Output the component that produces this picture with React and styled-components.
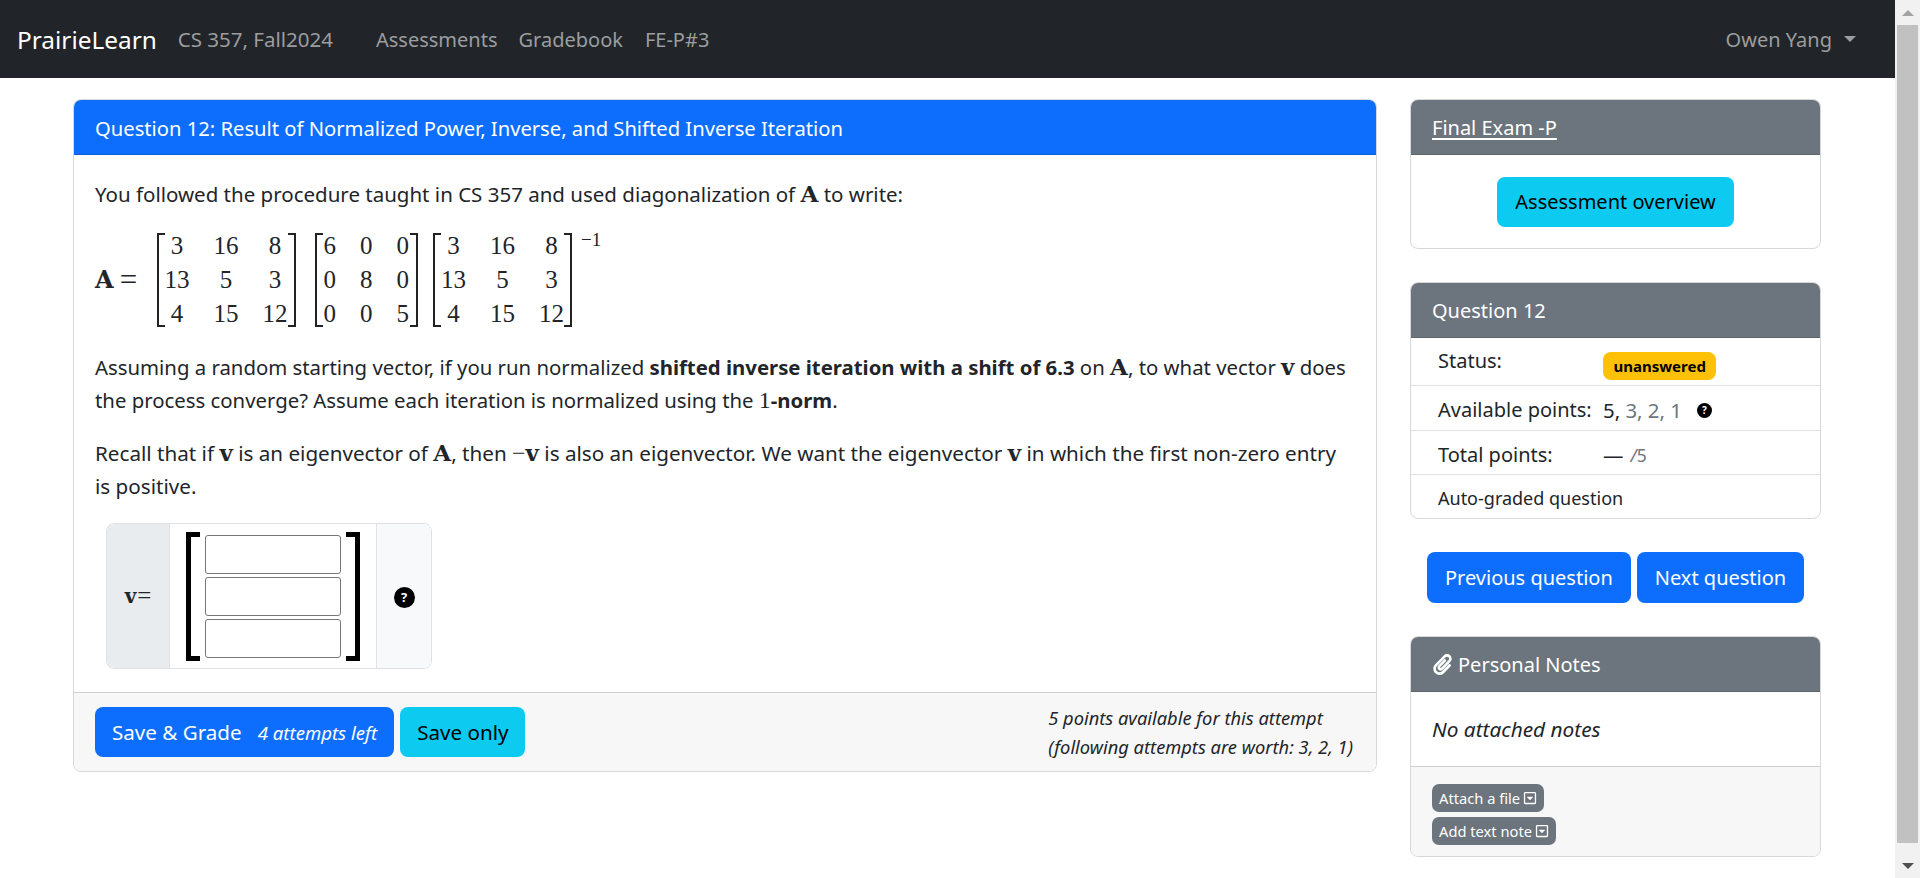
import React from 'react';
import styled, { createGlobalStyle } from 'styled-components';
import { FaPaperclip, FaRegCaretSquareDown } from 'react-icons/fa';

const UI_FONT = `"Noto Sans", "Open Sans", sans-serif`;
const MATH_FONT = `"Liberation Serif", serif`;
const MATH_BOLD = `"DejaVu Serif", serif`;

const GlobalStyle = createGlobalStyle`
  html, body {
    margin: 0;
    height: 878px;
    overflow: hidden;
    background: #fff;
  }
  * { box-sizing: border-box; }
  body {
    font-family: ${UI_FONT};
    font-size: 20px;
    color: #212529;
  }
`;

const Shell = styled.div`
  display: flex;
  height: 878px;
`;

const Page = styled.div`
  flex: 1;
  min-width: 0;
`;

const ScrollRail = styled.div`
  width: 25px;
  background: #f1f1f1;
  display: flex;
  flex-direction: column;
  align-items: center;
`;

const ScrollArrow = styled.div`
  height: 25px;
  display: flex;
  align-items: center;
  justify-content: center;
  &::before {
    content: '';
    border-left: 6px solid transparent;
    border-right: 6px solid transparent;
    ${p => (p.$down ? 'border-top: 6px solid #505050;' : 'border-bottom: 6px solid #a3a3a3;')}
  }
`;

const ScrollThumb = styled.div`
  width: 21px;
  height: 818px;
  background: #c1c1c1;
  margin-bottom: 10px;
`;

const Navbar = styled.nav`
  height: 78px;
  background: #212529;
  display: flex;
  align-items: center;
  padding: 0 39px 0 17px;
`;

const Brand = styled.a`
  color: #fff;
  font-size: 24.4px;
  margin-right: 21px;
`;

const NavLink = styled.a`
  color: #9c9d9f;
  margin-left: ${p => p.$left || 0}px;
`;

const CourseLink = styled(NavLink)`
  font-size: 20.5px;
`;

const UserMenu = styled.div`
  margin-left: auto;
  color: #9c9d9f;
  display: flex;
  align-items: center;
  gap: 12px;
  &::after {
    content: '';
    border-top: 6px solid #9c9d9f;
    border-left: 6px solid transparent;
    border-right: 6px solid transparent;
  }
`;

const Layout = styled.main`
  display: grid;
  grid-template-columns: 1304px 411px;
  column-gap: 33px;
  padding: 21px 0 0 73px;
  align-items: start;
`;

const Side = styled.aside`
  display: flex;
  flex-direction: column;
`;

const Card = styled.section`
  background: #fff;
  border: 1px solid #d8d8d8;
  border-radius: 8px;
  overflow: hidden;
  margin-bottom: ${p => p.$gap || 0}px;
`;

const CardHeader = styled.header`
  height: 55px;
  padding: ${p => (p.$primary ? '1px' : 0)} 21px 0;
  display: flex;
  align-items: center;
  color: #fff;
  background: ${p => (p.$primary ? '#0d6efd' : '#6c757d')};
  border-bottom: 1px solid rgba(0, 0, 0, 0.125);
  font-size: ${p => (p.$primary ? '20.2px' : '20px')};
`;

const HeaderLink = styled.a`
  color: #fff;
  text-decoration: underline;
  text-underline-offset: 3px;
`;

const HeaderClip = styled(FaPaperclip)`
  font-size: 21px;
  margin-right: 5px;
`;

const QuestionBody = styled.div`
  padding: 23px 21px 22px;
  height: 537px;
`;

const Para = styled.p`
  margin: 0 0 ${p => p.$after || 0}px;
  font-size: ${p => p.$size}px;
  line-height: 33px;
  white-space: nowrap;
`;

const Bold = styled.strong`
  font-weight: 700;
`;

const MathBold = styled.b`
  font-family: ${MATH_BOLD};
  font-size: 23px;
  font-weight: 700;
  line-height: 1;
`;

const MathPlain = styled.span`
  font-family: ${MATH_FONT};
  font-size: 24px;
  font-weight: 400;
  line-height: 1;
`;

const Equation = styled.div`
  display: flex;
  align-items: center;
  height: 105px;
  margin: 16px 0 19px;
  font-family: ${MATH_FONT};
  font-size: 25px;
`;

const EquationLabel = styled.span`
  width: 61.5px;
  display: flex;
  align-items: center;
  gap: 6px;
  b {
    font-family: ${MATH_BOLD};
    font-size: 24px;
  }
`;

const EqualsSign = styled.span`
  font-size: 31px;
  line-height: 1;
`;

const Matrix = styled.div`
  display: flex;
  align-self: center;
  height: 94px;
  margin-right: ${p => p.$after || 0}px;
  position: relative;
`;

const Bracket = styled.span`
  width: 8px;
  border: 0 solid #222;
  border-width: 2px 0;
  position: relative;
  z-index: 1;
  ${p => (p.$right ? 'border-right-width: 2px;' : 'border-left-width: 2px;')}
`;

const MatrixGrid = styled.div`
  display: grid;
  grid-template-columns: repeat(3, ${p => p.$col}px);
  grid-auto-rows: 34px;
  align-content: center;
  margin: 0 ${p => p.$inset || 0}px;
`;

const Cell = styled.span`
  display: flex;
  align-items: center;
  justify-content: center;
`;

const Exponent = styled.sup`
  position: absolute;
  left: calc(100% + 9px);
  top: -3px;
  font-size: 19px;
  line-height: 1;
  white-space: nowrap;
`;

const InputGroup = styled.div`
  display: grid;
  grid-template-columns: 63px 206px 1fr;
  width: 326px;
  height: 146px;
  margin: 20px 0 0 11px;
  border: 1px solid #dee2e6;
  border-radius: 8px;
  overflow: hidden;
`;

const InputLabel = styled.div`
  background: #e9ecef;
  border-right: 1px solid #dee2e6;
  display: flex;
  align-items: center;
  justify-content: center;
  gap: 1px;
  font-family: ${MATH_FONT};
  font-size: 25px;
  b {
    font-family: ${MATH_BOLD};
    font-size: 20px;
  }
`;

const InputCenter = styled.div`
  display: flex;
  justify-content: center;
  align-items: center;
  gap: 5px;
`;

const BigBracket = styled.span`
  width: 14px;
  height: 129px;
  border: 0 solid #000;
  border-width: 5px 0;
  ${p => (p.$right ? 'border-right-width: 5px;' : 'border-left-width: 5px;')}
`;

const InputStack = styled.div`
  display: flex;
  flex-direction: column;
  gap: 3px;
`;

const AnswerInput = styled.input`
  display: block;
  width: 136px;
  height: 39px;
  border: 1px solid #767676;
  border-radius: 3px;
  background: #fff;
  padding: 0;
`;

const InputHelp = styled.div`
  background: #f8f9fa;
  border-left: 1px solid #dee2e6;
  padding-top: 2px;
  display: flex;
  align-items: center;
  justify-content: center;
`;

const HelpDot = styled.span`
  width: ${p => p.$size}px;
  height: ${p => p.$size}px;
  border-radius: 50%;
  background: #000;
  color: #fff;
  font-size: ${p => Math.round(p.$size * 0.64)}px;
  font-weight: 700;
  line-height: 1;
  display: inline-flex;
  align-items: center;
  justify-content: center;
  flex: none;
`;

const QuestionFooter = styled.footer`
  height: 79px;
  background: #f7f7f7;
  border-top: 1px solid #cfcfcf;
  display: flex;
  align-items: center;
  padding: 0 23px 0 21px;
  gap: 6px;
`;

const Button = styled.button`
  height: ${p => p.$h || 50}px;
  padding: 0 18px;
  border: 0;
  border-radius: 8px;
  font: inherit;
  white-space: nowrap;
  color: ${p => (p.$info ? '#000' : '#fff')};
  background: ${p => (p.$info ? '#0dcaf0' : '#0d6efd')};
`;

const FooterButton = styled(Button)`
  padding: 0 17px;
  font-size: 20.6px;
`;

const AttemptsLeft = styled.small`
  font-size: 18.6px;
  font-style: italic;
  margin-left: 16px;
`;

const AttemptNote = styled.div`
  margin-left: auto;
  font-size: 18.3px;
  font-style: italic;
  line-height: 29px;
  white-space: nowrap;
`;

const OverviewBody = styled.div`
  height: 93px;
  display: flex;
  align-items: center;
  justify-content: center;
`;

const InfoRow = styled.div`
  display: grid;
  grid-template-columns: 165px 1fr;
  align-items: start;
  height: ${p => p.$h}px;
  padding: ${p => p.$top}px 0 0 27px;
  border-bottom: 1px solid #dee2e6;
`;

const AutoGraded = styled.div`
  height: 43px;
  padding: 2px 0 0 27px;
  display: flex;
  align-items: center;
  font-size: 18px;
`;

const InfoValue = styled.span`
  display: flex;
  align-items: center;
  gap: 15px;
  white-space: nowrap;
  font-size: 20.4px;
`;

const Muted = styled.span`
  color: #6c757d;
`;

const Badge = styled.span`
  height: 28px;
  padding: 0 10.5px;
  margin-top: 5px;
  border-radius: 8px;
  background: #ffc107;
  color: #000;
  font-size: 15px;
  font-weight: 700;
  display: inline-flex;
  align-items: center;
`;

const TotalSlash = styled.span`
  color: #6c757d;
  font-size: 17.5px;
  margin-left: -8px;
`;

const PagerRow = styled.div`
  display: flex;
  gap: 6px;
  padding-left: 17px;
  margin: 33px 0;
`;

const NotesBody = styled.div`
  height: 74px;
  padding-left: 21px;
  display: flex;
  align-items: center;
  font-size: 20.8px;
  font-style: italic;
`;

const NotesFooter = styled.div`
  height: 90px;
  background: #f7f7f7;
  border-top: 1px solid #cfcfcf;
  padding: 17px 21px 0;
  display: flex;
  flex-direction: column;
  align-items: flex-start;
  gap: 5px;
`;

const SmallButton = styled.button`
  height: 28px;
  padding: 0 7px;
  border: 0;
  border-radius: 7px;
  background: #6c757d;
  color: #fff;
  font-family: inherit;
  font-size: 14.7px;
  display: inline-flex;
  align-items: center;
  gap: 3px;
  white-space: nowrap;
  svg { font-size: 14px; }
`;

const m1 = [3, 16, 8, 13, 5, 3, 4, 15, 12];
const m2 = [6, 0, 0, 0, 8, 0, 0, 0, 5];

function MatrixBlock({ values, col, inset, after, children }) {
  return (
    <Matrix $after={after}>
      <Bracket />
      <MatrixGrid $col={col} $inset={inset}>
        {values.map((v, i) => <Cell key={i}>{v}</Cell>)}
      </MatrixGrid>
      <Bracket $right />
      {children}
    </Matrix>
  );
}

export default function App() {
  return (
    <>
      <GlobalStyle />
      <Shell>
        <Page>
          <Navbar>
            <Brand>PrairieLearn</Brand>
            <CourseLink>CS 357, Fall2024</CourseLink>
            <NavLink $left={43}>Assessments</NavLink>
            <NavLink $left={21}>Gradebook</NavLink>
            <NavLink $left={22}>FE-P#3</NavLink>
            <UserMenu>Owen Yang</UserMenu>
          </Navbar>
          <Layout>
            <Card>
              <CardHeader $primary>Question 12: Result of Normalized Power, Inverse, and Shifted Inverse Iteration</CardHeader>
              <QuestionBody>
                <Para $size={20.5}>
                  You followed the procedure taught in CS 357 and used diagonalization of <MathBold>A</MathBold> to write:
                </Para>
                <Equation>
                  <EquationLabel><b>A</b><EqualsSign>=</EqualsSign></EquationLabel>
                  <MatrixBlock values={m1} col={49} inset={-12} after={19} />
                  <MatrixBlock values={m2} col={36.5} inset={-11} after={15} />
                  <MatrixBlock values={m1} col={49} inset={-12}>
                    <Exponent>−1</Exponent>
                  </MatrixBlock>
                </Equation>
                <Para $size={20.35} $after={20}>
                  Assuming a random starting vector, if you run normalized <Bold>shifted inverse iteration with a shift of 6.3</Bold> on <MathBold>A</MathBold>, to what vector <MathBold>v</MathBold> does<br />
                  the process converge? Assume each iteration is normalized using the <Bold><MathPlain>1</MathPlain>-norm</Bold>.
                </Para>
                <Para $size={20.65}>
                  Recall that if <MathBold>v</MathBold> is an eigenvector of <MathBold>A</MathBold>, then <MathPlain>−</MathPlain><MathBold>v</MathBold> is also an eigenvector. We want the eigenvector <MathBold>v</MathBold> in which the first non-zero entry<br />
                  is positive.
                </Para>
                <InputGroup>
                  <InputLabel><b>v</b>=</InputLabel>
                  <InputCenter>
                    <BigBracket />
                    <InputStack>
                      <AnswerInput />
                      <AnswerInput />
                      <AnswerInput />
                    </InputStack>
                    <BigBracket $right />
                  </InputCenter>
                  <InputHelp><HelpDot $size={21}>?</HelpDot></InputHelp>
                </InputGroup>
              </QuestionBody>
              <QuestionFooter>
                <FooterButton>Save &amp; Grade<AttemptsLeft>4 attempts left</AttemptsLeft></FooterButton>
                <FooterButton $info>Save only</FooterButton>
                <AttemptNote>
                  5 points available for this attempt<br />
                  (following attempts are worth: 3, 2, 1)
                </AttemptNote>
              </QuestionFooter>
            </Card>
            <Side>
              <Card $gap={33}>
                <CardHeader><HeaderLink>Final Exam -P</HeaderLink></CardHeader>
                <OverviewBody><Button $info>Assessment overview</Button></OverviewBody>
              </Card>
              <Card>
                <CardHeader>Question 12</CardHeader>
                <InfoRow $h={48} $top={9}>
                  <span>Status:</span>
                  <InfoValue><Badge>unanswered</Badge></InfoValue>
                </InfoRow>
                <InfoRow $h={45} $top={10}>
                  <span>Available points:</span>
                  <InfoValue><span>5, <Muted>3, 2, 1</Muted></span><HelpDot $size={15}>?</HelpDot></InfoValue>
                </InfoRow>
                <InfoRow $h={44} $top={10}>
                  <span>Total points:</span>
                  <InfoValue>—<TotalSlash><i>/</i>5</TotalSlash></InfoValue>
                </InfoRow>
                <AutoGraded>Auto-graded question</AutoGraded>
              </Card>
              <PagerRow>
                <Button $h={51}>Previous question</Button>
                <Button $h={51}>Next question</Button>
              </PagerRow>
              <Card>
                <CardHeader><HeaderClip />Personal Notes</CardHeader>
                <NotesBody>No attached notes</NotesBody>
                <NotesFooter>
                  <SmallButton>Attach a file <FaRegCaretSquareDown /></SmallButton>
                  <SmallButton>Add text note <FaRegCaretSquareDown /></SmallButton>
                </NotesFooter>
              </Card>
            </Side>
          </Layout>
        </Page>
        <ScrollRail>
          <ScrollArrow />
          <ScrollThumb />
          <ScrollArrow $down />
        </ScrollRail>
      </Shell>
    </>
  );
}
